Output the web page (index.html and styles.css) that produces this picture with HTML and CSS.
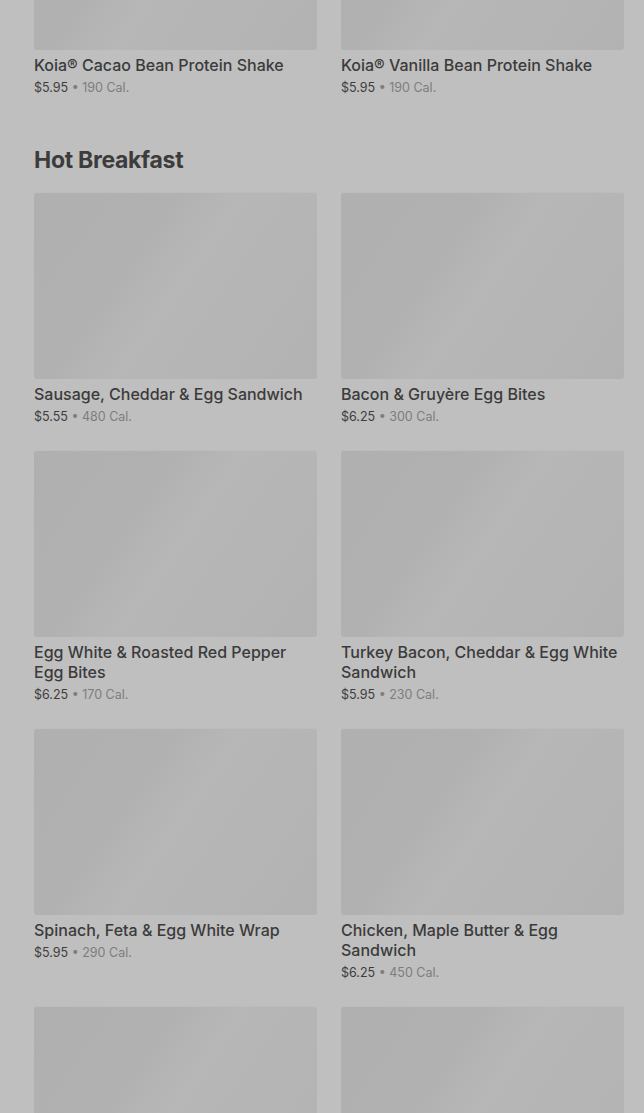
FILE: index.html
```html
<!DOCTYPE html>
<html lang="en">
<head>
    <meta charset="UTF-8">
    <meta name="viewport" content="width=device-width, initial-scale=1.0">
    <title>Menu</title>
    <link rel="stylesheet" href="styles.css">
</head>
<body>

    <div class="menu">

        <section class="menu-section">
            <div class="product-grid">
                <div class="product">
                    <div class="product-image"></div>
                    <div class="product-name">Koia® Cacao Bean Protein Shake</div>
                    <div class="product-meta"><span class="price">$5.95</span> • 190 Cal.</div>
                </div>
                <div class="product">
                    <div class="product-image"></div>
                    <div class="product-name">Koia® Vanilla Bean Protein Shake</div>
                    <div class="product-meta"><span class="price">$5.95</span> • 190 Cal.</div>
                </div>
            </div>
        </section>

        <section class="menu-section">
            <h2>Hot Breakfast</h2>
            <div class="product-grid">
                <div class="product">
                    <div class="product-image"></div>
                    <div class="product-name">Sausage, Cheddar &amp; Egg Sandwich</div>
                    <div class="product-meta"><span class="price">$5.55</span> • 480 Cal.</div>
                </div>
                <div class="product">
                    <div class="product-image"></div>
                    <div class="product-name">Bacon &amp; Gruyère Egg Bites</div>
                    <div class="product-meta"><span class="price">$6.25</span> • 300 Cal.</div>
                </div>
                <div class="product">
                    <div class="product-image"></div>
                    <div class="product-name">Egg White &amp; Roasted Red Pepper Egg Bites</div>
                    <div class="product-meta"><span class="price">$6.25</span> • 170 Cal.</div>
                </div>
                <div class="product">
                    <div class="product-image"></div>
                    <div class="product-name">Turkey Bacon, Cheddar &amp; Egg White Sandwich</div>
                    <div class="product-meta"><span class="price">$5.95</span> • 230 Cal.</div>
                </div>
                <div class="product">
                    <div class="product-image"></div>
                    <div class="product-name">Spinach, Feta &amp; Egg White Wrap</div>
                    <div class="product-meta"><span class="price">$5.95</span> • 290 Cal.</div>
                </div>
                <div class="product">
                    <div class="product-image"></div>
                    <div class="product-name">Chicken, Maple Butter &amp; Egg Sandwich</div>
                    <div class="product-meta"><span class="price">$6.25</span> • 450 Cal.</div>
                </div>
                <div class="product">
                    <div class="product-image"></div>
                </div>
                <div class="product">
                    <div class="product-image"></div>
                </div>
            </div>
        </section>

    </div>

</body>
</html>
```

FILE: styles.css
```css
body {
    margin: 0;
    background-color: #bfbfbf;
    font-family: 'Inter', 'Noto Sans', sans-serif;
    color: #3a3a3a;
    overflow: hidden;
}

.menu {
    margin-top: -137px;
    padding: 0 20px 0 34px;
}

.menu-section {
    margin-bottom: 46px;
}

.menu-section h2 {
    margin: 0 0 16px 0;
    font-size: 23px;
    line-height: 32px;
    font-weight: 700;
    letter-spacing: -0.3px;
    color: #3c3c3c;
}

.product-grid {
    display: grid;
    grid-template-columns: 1fr 1fr;
    column-gap: 24px;
    row-gap: 23px;
}

.product-image {
    box-sizing: border-box;
    height: 187px;
    border-radius: 3px;
    border-top: 1px solid #bcbcbc;
    background: linear-gradient(125deg, #b0b0b0 0%, #b1b1b1 35%, #b7b7b7 50%, #b5b5b5 70%, #b2b2b2 100%);
}

.product-name {
    margin-top: 5px;
    font-size: 16px;
    line-height: 20px;
    font-weight: 500;
    color: #3b3b3b;
}

.product-meta {
    margin-top: 3px;
    font-size: 12.5px;
    line-height: 20px;
    color: #7d7d7d;
}

.product-meta .price {
    color: #3d3d3d;
}
```
